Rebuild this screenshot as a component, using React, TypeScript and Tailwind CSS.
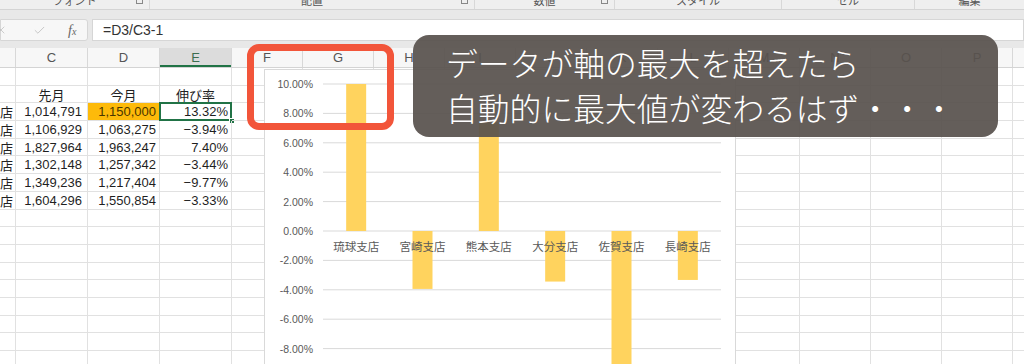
import { Check, X } from "lucide-react";

const cols: { key: string; w: number; label: boolean }[] = [
  { key: "B", w: 16, label: false },
  { key: "C", w: 72, label: true },
  { key: "D", w: 72, label: true },
  { key: "E", w: 72, label: true },
  { key: "F", w: 71, label: true },
  { key: "G", w: 71, label: true },
  { key: "H", w: 71, label: true },
  { key: "I", w: 71, label: true },
  { key: "J", w: 71, label: true },
  { key: "K", w: 71, label: true },
  { key: "L", w: 71, label: true },
  { key: "M", w: 71, label: true },
  { key: "N", w: 71, label: true },
  { key: "O", w: 71, label: true },
  { key: "P", w: 71, label: true },
  { key: "Q", w: 40, label: true },
];

const shops = [
  { name: "琉球支店", prev: "1,014,791", cur: "1,150,000", rate: "13.32%", v: 13.32 },
  { name: "宮崎支店", prev: "1,106,929", cur: "1,063,275", rate: "−3.94%", v: -3.94 },
  { name: "熊本支店", prev: "1,827,964", cur: "1,963,247", rate: "7.40%", v: 7.4 },
  { name: "大分支店", prev: "1,302,148", cur: "1,257,342", rate: "−3.44%", v: -3.44 },
  { name: "佐賀支店", prev: "1,349,236", cur: "1,217,404", rate: "−9.77%", v: -9.77 },
  { name: "長崎支店", prev: "1,604,296", cur: "1,550,854", rate: "−3.33%", v: -3.33 },
];

const jp = "font-['Noto_Sans_CJK_JP',sans-serif]";

function cellContent(row: number, key: string) {
  // row 2 = headings, rows 3..8 = data
  if (row === 2) {
    const h: Record<string, string> = { C: "先月", D: "今月", E: "伸び率" };
    if (h[key]) return <span className={`w-full text-center ${jp}`}>{h[key]}</span>;
    return null;
  }
  const s = shops[row - 3];
  if (!s) return null;
  if (key === "B") return <span className={`shrink-0 pr-[2px] ${jp}`}>{s.name}</span>;
  if (key === "C") return <span className="w-full text-right pr-[5px]">{s.prev}</span>;
  if (key === "D") return <span className="w-full text-right pr-[3px]">{s.cur}</span>;
  if (key === "E") return <span className="w-full text-right pr-[3px]">{s.rate}</span>;
  return null;
}

function Chart() {
  const y = (v: number) => 161 - 14.7 * v;
  const ticks = [10, 8, 6, 4, 2, 0, -2, -4, -6, -8, -10];
  const step = 398 / 6;
  return (
    <div className="absolute left-[264px] top-[69px] w-[472px] h-[300px] bg-white border border-[#d9d9d9]">
      <svg width="470" height="300" className="block">
        {ticks.map((t) => (
          <g key={t}>
            <line x1="58" x2="456" y1={y(t)} y2={y(t)} stroke="#d9d9d9" strokeWidth="1" />
            <text
              x="48"
              y={y(t) + 4}
              textAnchor="end"
              fontSize="10.5"
              fill="#595959"
              fontFamily="'Liberation Sans', sans-serif"
            >
              {t.toFixed(2)}%
            </text>
          </g>
        ))}
        {shops.map((s, i) => {
          const cx = 58 + step * (i + 0.5);
          const v = Math.min(s.v, 10);
          const top = v > 0 ? y(v) : y(0);
          const h = Math.abs(y(v) - y(0));
          return <rect key={s.name} x={cx - 10} y={top} width="20" height={h} fill="#ffd35e" />;
        })}
        {shops.map((s, i) => (
          <text
            key={s.name}
            x={58 + step * (i + 0.5)}
            y="181"
            textAnchor="middle"
            fontSize="11.5"
            fill="#595959"
            fontFamily="'Noto Sans CJK JP', sans-serif"
          >
            {s.name}
          </text>
        ))}
      </svg>
    </div>
  );
}

export default function App() {
  const rows = Array.from({ length: 17 }, (_, i) => i + 1);
  const groups = [
    { label: "フォント", w: 150, launcher: true },
    { label: "配置", w: 325, launcher: true },
    { label: "数値", w: 140, launcher: true },
    { label: "スタイル", w: 167, launcher: false },
    { label: "セル", w: 133, launcher: false },
    { label: "編集", w: 109, launcher: false },
  ];

  return (
    <div className="relative w-[1024px] h-[364px] overflow-hidden bg-white font-['Liberation_Sans',sans-serif] text-[13px] text-[#1f1f1f]">
      {/* Ribbon group labels (cut off) */}
      <div className="flex h-[9px] overflow-hidden bg-[#efefef]">
        {groups.map((g) => (
          <div key={g.label} style={{ width: g.w }} className="relative flex justify-center border-r border-[#d8d8d8] last:border-r-0">
            <span className={`-mt-[6px] text-[11px] leading-[12px] text-[#555] ${jp}`}>{g.label}</span>
            {g.launcher && (
              <span className="absolute right-[6px] -top-[3px] w-[7px] h-[7px] border border-[#888]" />
            )}
          </div>
        ))}
      </div>
      <div className="h-px bg-[#d4d4d4]" />

      {/* Formula bar */}
      <div className="flex gap-[4px] h-[38px] bg-[#e8e8e8] pt-[9px]">
        <div className="flex items-center w-[88px] h-[22px] bg-[#f7f7f7] border border-[#d6d6d6] rounded-r-[3px] text-[#bdbdbd]">
          <X size={12} strokeWidth={1.5} className="-ml-[6px]" />
          <Check size={13} strokeWidth={1.5} className="ml-[26px]" />
          <span className="ml-[22px] italic font-['Liberation_Serif',serif] text-[14px] text-[#666]">
            f<span className="text-[10px]">x</span>
          </span>
        </div>
        <div className="flex-1 flex items-center h-[22px] bg-white border border-[#d6d6d6] pl-[10px] text-[14px] text-[#333]">
          =D3/C3-1
        </div>
      </div>

      {/* Column headers */}
      <div className="flex h-[20px] bg-[#f7f7f7] border-b border-[#d4d4d4]">
        {cols.map((c) => (
          <div
            key={c.key}
            style={{ width: c.w }}
            className={`shrink-0 flex items-center justify-center border-r border-[#d8d8d8] text-[13px] ${
              c.key === "E" ? "bg-[#dcdcdc] shadow-[inset_0_-2px_0_#217346] text-[#3c6e50]" : "text-[#555]"
            }`}
          >
            {c.label ? c.key : ""}
          </div>
        ))}
      </div>

      {/* Rows */}
      <div>
        {rows.map((r) => (
          <div key={r} className="flex h-[17.7px]">
            {cols.map((c) => {
              const isD3 = r === 3 && c.key === "D";
              const isE3 = r === 3 && c.key === "E";
              return (
                <div
                  key={c.key}
                  style={{ width: c.w }}
                  className={`relative shrink-0 flex items-center whitespace-nowrap border-r border-b border-[#e1e1e1] leading-none ${
                    c.key === "B" ? "justify-end" : ""
                  } ${isE3 ? "overflow-visible" : "overflow-hidden"} ${isD3 ? "bg-[#fdba0a] text-[#4a3600]" : ""}`}
                >
                  {cellContent(r, c.key)}
                  {isE3 && (
                    <>
                      <span className="absolute -left-px -top-px -right-px -bottom-px border-2 border-[#217346]" />
                      <span className="absolute -right-[4px] -bottom-[4px] w-[6px] h-[6px] bg-[#217346] border border-white" />
                    </>
                  )}
                </div>
              );
            })}
          </div>
        ))}
      </div>

      <Chart />

      {/* Red highlight frame */}
      <div className="absolute left-[247px] top-[44px] w-[147px] h-[86px] rounded-[12px] border-[7px] border-[#f2553a]" />

      {/* Caption overlay */}
      <div
        className={`absolute left-[413px] top-[35px] w-[585px] h-[102px] rounded-[16px] bg-[#58524d]/[0.93] pl-[33px] pt-[5px] text-white text-[31.8px] leading-[45px] font-light ${jp}`}
      >
        <div>データが軸の最大を超えたら</div>
        <div>自動的に最大値が変わるはず・・・</div>
      </div>
    </div>
  );
}
